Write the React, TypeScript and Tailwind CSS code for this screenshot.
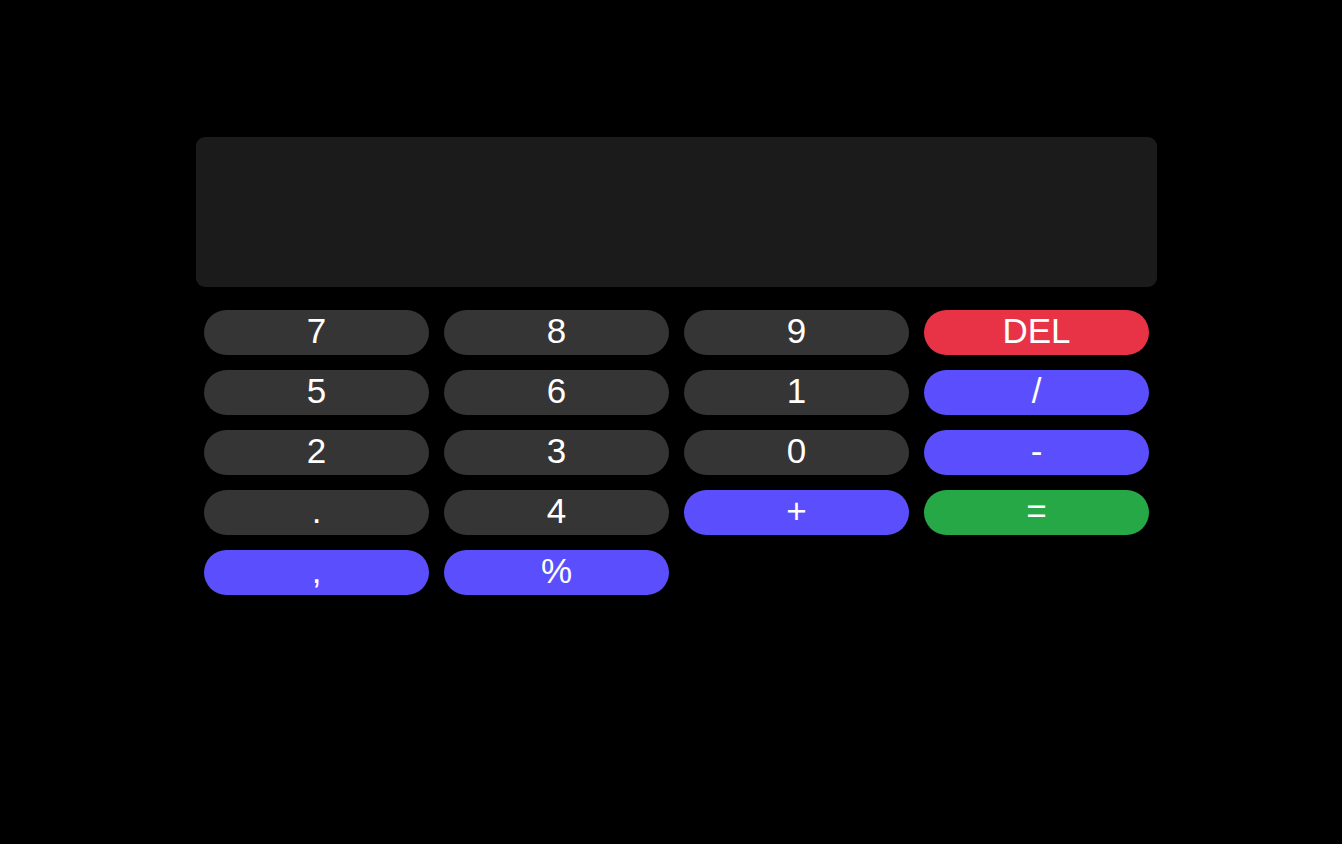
import React from "react";

type Key = { label: string; tone: "num" | "op" | "del" | "eq" };

const keys: Key[] = [
  { label: "7", tone: "num" },
  { label: "8", tone: "num" },
  { label: "9", tone: "num" },
  { label: "DEL", tone: "del" },
  { label: "5", tone: "num" },
  { label: "6", tone: "num" },
  { label: "1", tone: "num" },
  { label: "/", tone: "op" },
  { label: "2", tone: "num" },
  { label: "3", tone: "num" },
  { label: "0", tone: "num" },
  { label: "-", tone: "op" },
  { label: ".", tone: "num" },
  { label: "4", tone: "num" },
  { label: "+", tone: "op" },
  { label: "=", tone: "eq" },
  { label: ",", tone: "op" },
  { label: "%", tone: "op" },
];

const toneClass: Record<Key["tone"], string> = {
  num: "bg-[#353535]",
  op: "bg-[#5b4ffd]",
  del: "bg-[#e83347]",
  eq: "bg-[#27a846]",
};

export default function App() {
  return (
    <div className="min-h-screen bg-black pt-[137px] font-['Liberation_Sans',Arial,sans-serif]">
      <div className="ml-[196px] w-[961px]">
        {/* Display */}
        <div className="h-[150px] rounded-[9px] bg-[#1c1b1c]" />

        {/* Keypad */}
        <div className="mt-[15px] grid grid-cols-4 gap-[15px] px-2 py-2">
          {keys.map((k) => (
            <button
              key={k.label}
              className={`flex h-[45px] items-center justify-center rounded-full pb-[5px] text-[35px] leading-none text-white ${toneClass[k.tone]}`}
            >
              {k.label}
            </button>
          ))}
        </div>
      </div>
    </div>
  );
}
